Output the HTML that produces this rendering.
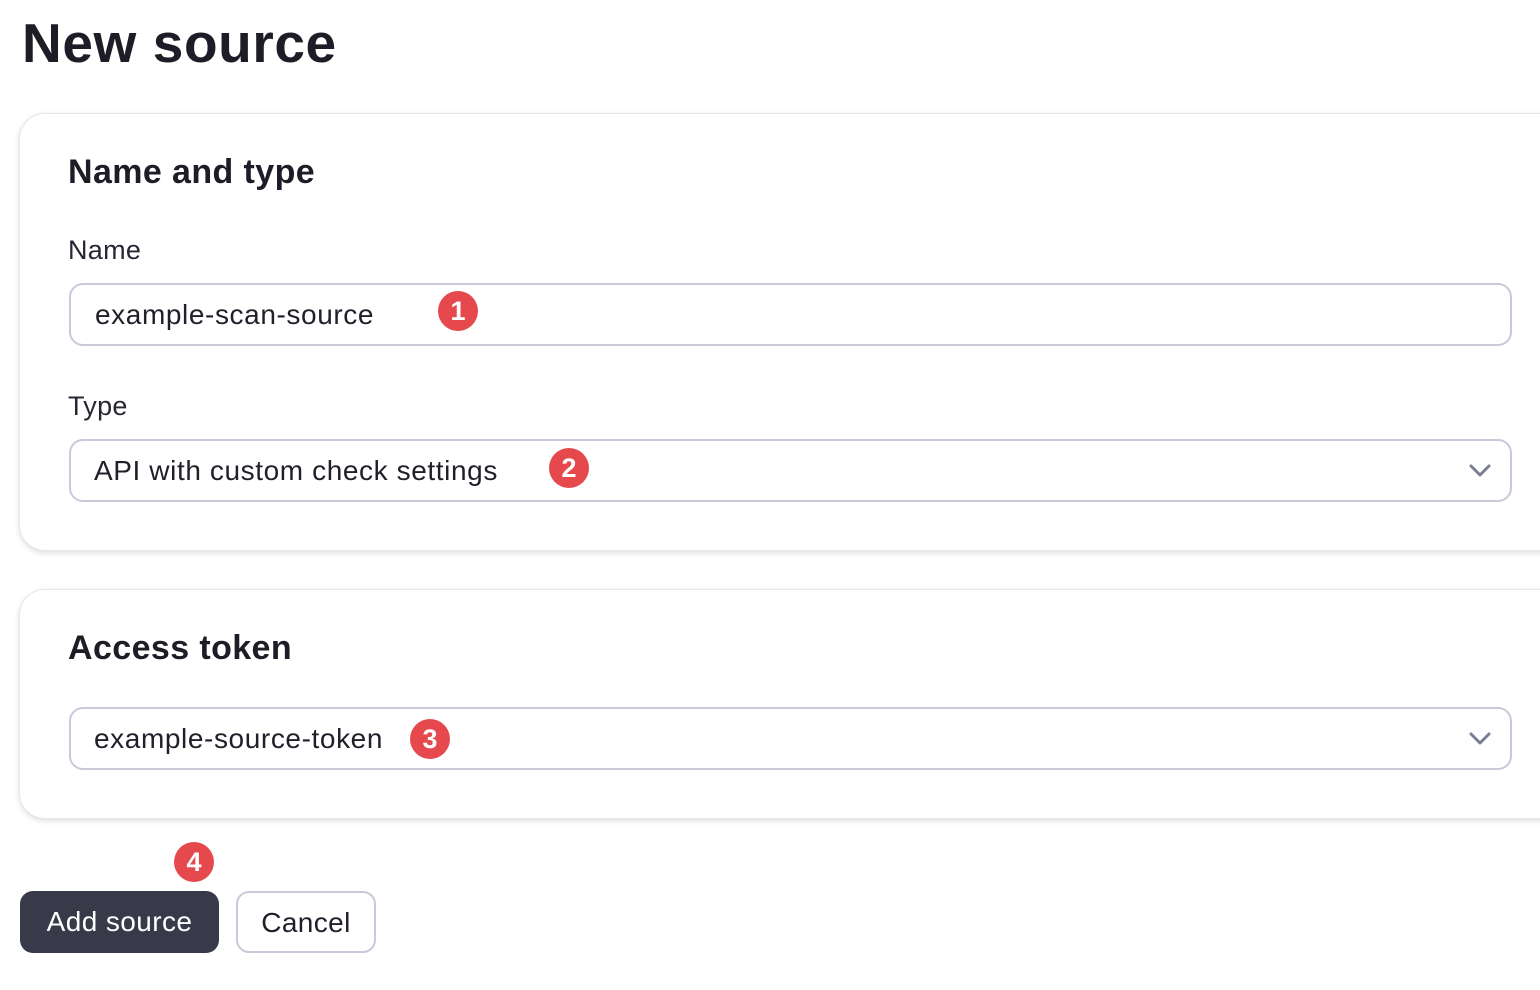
<!DOCTYPE html>
<html><head><style>
body{margin:0;width:1540px;height:990px;background:#fff;font-family:"Liberation Sans",sans-serif;color:#1f2029;position:relative;overflow:hidden}
h1{position:absolute;left:22px;top:11px;margin:0;font-size:55px;font-weight:bold;letter-spacing:0.6px;color:#1c1d26}
.card{position:absolute;left:19px;width:1560px;background:#fff;border-radius:26px;border:1px solid #e6e6ec;box-shadow:0 2px 6px rgba(0,0,0,0.13)}
h2{position:absolute;left:48px;margin:0;font-size:34px;font-weight:bold;color:#1c1d26;letter-spacing:0.4px}
.lbl{position:absolute;left:48px;font-size:27px;color:#262733;letter-spacing:0.3px}
.inp{position:absolute;left:49px;width:1443px;height:63px;border:2px solid #c9cad9;border-radius:14px;box-sizing:border-box}
.inp span{position:absolute;left:23px;top:14px;font-size:28px;color:#1f2029;letter-spacing:0.6px}
.badge{position:absolute;width:40px;height:40px;border-radius:50%;background:#e5484d;color:#fff;font-weight:bold;font-size:27px;text-align:center;line-height:40px}
.chev{position:absolute;right:19px;top:23px}
.btn{position:absolute;top:891px;height:62px;border-radius:13px;box-sizing:border-box;font-size:28px;line-height:62px;text-align:center;letter-spacing:0.4px}
</style></head><body>
<h1>New source</h1>
<div class="card" style="top:113px;height:436px">
  <h2 style="top:39px">Name and type</h2>
  <div class="lbl" style="top:121px">Name</div>
  <div class="inp" style="top:169px"><span style="left:24px">example-scan-source</span></div>
  <div class="lbl" style="top:277px">Type</div>
  <div class="inp" style="top:325px"><span>API with custom check settings</span>
    <svg class="chev" width="22" height="14" viewBox="0 0 22 14"><path d="M2 2l9 9 9-9" fill="none" stroke="#7a7d96" stroke-width="3" stroke-linecap="round" stroke-linejoin="round"/></svg></div>
</div>
<div class="card" style="top:589px;height:228px">
  <h2 style="top:39px">Access token</h2>
  <div class="inp" style="top:117px"><span>example-source-token</span>
    <svg class="chev" width="22" height="14" viewBox="0 0 22 14"><path d="M2 2l9 9 9-9" fill="none" stroke="#7a7d96" stroke-width="3" stroke-linecap="round" stroke-linejoin="round"/></svg></div>
</div>
<div class="badge" style="left:438px;top:291px">1</div>
<div class="badge" style="left:549px;top:448px">2</div>
<div class="badge" style="left:410px;top:719px">3</div>
<div class="badge" style="left:174px;top:842px">4</div>
<div class="btn" style="left:20px;width:199px;background:#383a4a;color:#fff">Add source</div>
<div class="btn" style="left:236px;width:140px;border:2px solid #c9cad9;color:#1f2029;line-height:59px">Cancel</div>
</body></html>
